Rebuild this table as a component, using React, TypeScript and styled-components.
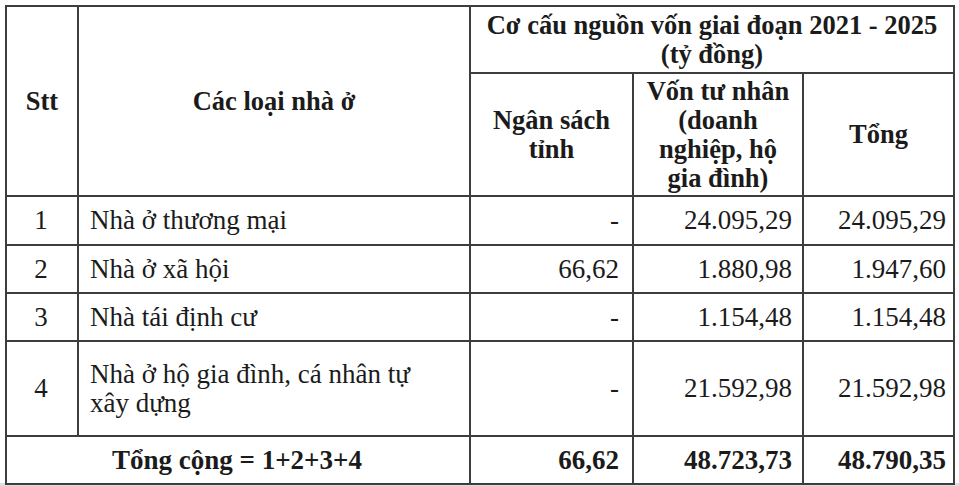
import React from 'react'
import styled, { createGlobalStyle } from 'styled-components'

const GlobalStyle = createGlobalStyle`
    html, body {
        margin: 0;
        padding: 0;
        background-color: #ffffff;
    }
    body {
        font-family: "Liberation Serif", "Times New Roman", serif;
        color: #1b1b1b;
    }
`

const Page = styled.div`
    width: 959px;
    height: 486px;
    padding: 5px 0 0 5px;
    box-sizing: border-box;
    border-bottom: 3px solid #dedede;
`

const Table = styled.table`
    width: 948px;
    table-layout: fixed;
    border-collapse: collapse;
    font-size: 27px;
    line-height: 29px;
`

const Row = styled.tr<{ $h: number }>`
    height: ${props => props.$h}px;
`

const HeadCell = styled.th`
    border: 2px solid #3d3d3d;
    font-weight: 700;
    font-size: 26.5px;
    text-align: center;
    vertical-align: middle;
    padding: 0 4px;
`

const Cell = styled.td<{ $align?: 'left' | 'center' | 'right'; $pr?: number; $bold?: boolean }>`
    border: 2px solid #3d3d3d;
    text-align: ${props => props.$align || 'left'};
    vertical-align: middle;
    font-weight: ${props => (props.$bold ? 700 : 400)};
    padding: 0 ${props => props.$pr ?? 6}px 0 ${props => (props.$align === 'left' ? 11 : 4)}px;
`

type Item = {
    stt: string
    name: React.ReactNode
    budget: string
    privateCap: string
    total: string
    h: number
}

const items: Item[] = [
    { stt: '1', name: 'Nhà ở thương mại', budget: '-', privateCap: '24.095,29', total: '24.095,29', h: 49 },
    { stt: '2', name: 'Nhà ở xã hội', budget: '66,62', privateCap: '1.880,98', total: '1.947,60', h: 48 },
    { stt: '3', name: 'Nhà tái định cư', budget: '-', privateCap: '1.154,48', total: '1.154,48', h: 48 },
    {
        stt: '4',
        name: (
            <>
                Nhà ở hộ gia đình, cá nhân tự
                <br />
                xây dựng
            </>
        ),
        budget: '-',
        privateCap: '21.592,98',
        total: '21.592,98',
        h: 95,
    },
]

const App = () => {
    return (
        <Page>
            <GlobalStyle />
            <Table>
                <colgroup>
                    <col style={{ width: 72 }} />
                    <col style={{ width: 392 }} />
                    <col style={{ width: 163 }} />
                    <col style={{ width: 170 }} />
                    <col style={{ width: 151 }} />
                </colgroup>
                <thead>
                    <Row $h={67}>
                        <HeadCell rowSpan={2}>Stt</HeadCell>
                        <HeadCell rowSpan={2}>Các loại nhà ở</HeadCell>
                        <HeadCell colSpan={3}>
                            Cơ cấu nguồn vốn giai đoạn 2021 - 2025
                            <br />
                            (tỷ đồng)
                        </HeadCell>
                    </Row>
                    <Row $h={123}>
                        <HeadCell>
                            Ngân sách
                            <br />
                            tỉnh
                        </HeadCell>
                        <HeadCell>
                            Vốn tư nhân
                            <br />
                            (doanh
                            <br />
                            nghiệp, hộ
                            <br />
                            gia đình)
                        </HeadCell>
                        <HeadCell>Tổng</HeadCell>
                    </Row>
                </thead>
                <tbody>
                    {items.map(item => (
                        <Row $h={item.h} key={item.stt}>
                            <Cell $align='center'>{item.stt}</Cell>
                            <Cell $align='left'>{item.name}</Cell>
                            <Cell $align='right' $pr={13}>{item.budget}</Cell>
                            <Cell $align='right' $pr={10}>{item.privateCap}</Cell>
                            <Cell $align='right' $pr={7}>{item.total}</Cell>
                        </Row>
                    ))}
                    <Row $h={48}>
                        <Cell $align='center' $bold colSpan={2}>Tổng cộng = 1+2+3+4</Cell>
                        <Cell $align='right' $pr={13} $bold>66,62</Cell>
                        <Cell $align='right' $pr={10} $bold>48.723,73</Cell>
                        <Cell $align='right' $pr={7} $bold>48.790,35</Cell>
                    </Row>
                </tbody>
            </Table>
        </Page>
    )
}

export default App
